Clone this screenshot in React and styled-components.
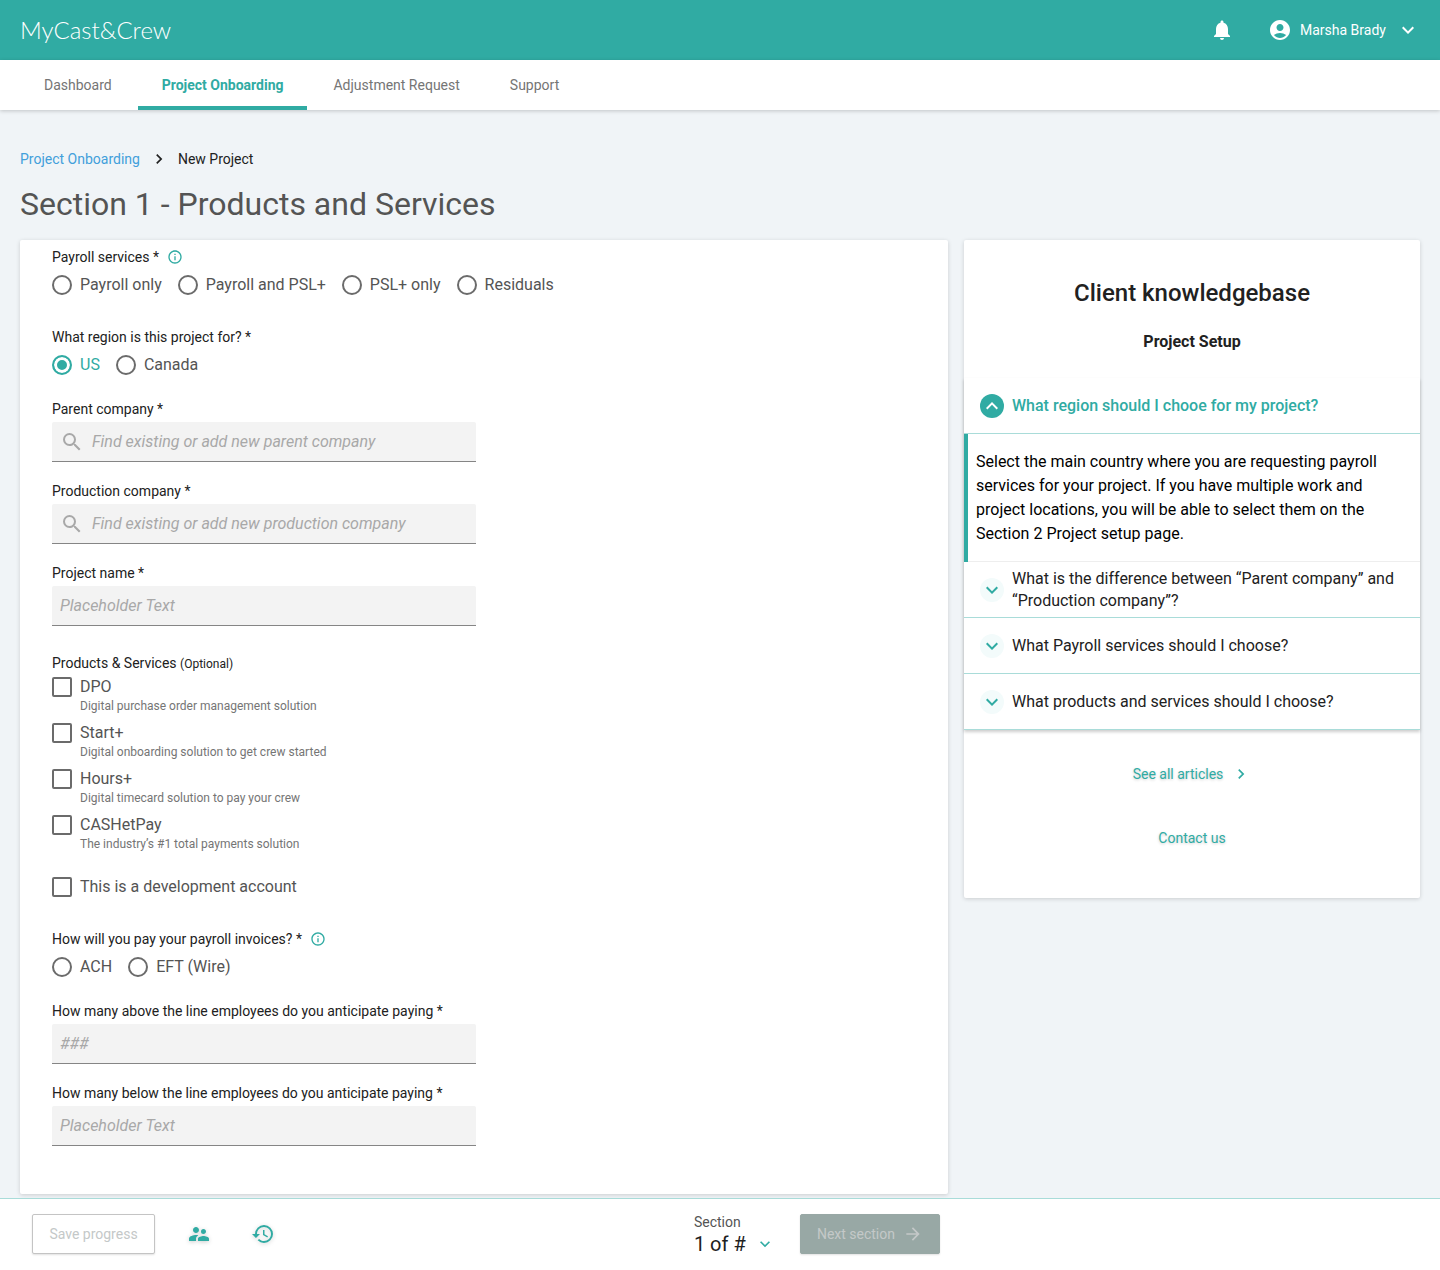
import React, { useState } from "react";
import styled, { createGlobalStyle, css } from "styled-components";
import {
  MdAccountCircle,
  MdArrowForward,
  MdChevronRight,
  MdExpandLess,
  MdExpandMore,
  MdHistory,
  MdInfoOutline,
  MdNotifications,
  MdSearch,
  MdSupervisorAccount,
} from "react-icons/md";

const color = {
  teal: "#30aba3",
  tealLine: "#a9dcd9",
  tealTint: "#f3fbfb",
  page: "#f0f4f7",
  ink: "#212121",
  text: "#545454",
  muted: "#757575",
  field: "#f3f3f3",
  placeholder: "#a8a8a8",
  link: "#429fdb",
};

const GlobalStyle = createGlobalStyle`
  *, *::before, *::after { box-sizing: border-box; }
  body {
    margin: 0;
    background: ${color.page};
    color: ${color.ink};
    font: 400 14px/20px Roboto, "Liberation Sans", sans-serif;
  }
  h1, h2, h3, p { margin: 0; }
  button, input, select { font: inherit; color: inherit; }
  a { text-decoration: none; color: inherit; }
  svg { display: block; flex: none; }
`;

const Page = styled.div`
  min-height: 100vh;
  display: flex;
  flex-direction: column;
`;

const PlainButton = styled.button`
  display: flex;
  align-items: center;
  padding: 0;
  border: 0;
  background: none;
  cursor: pointer;
`;

/* Top bar */
const TopBar = styled.header`
  display: flex;
  align-items: center;
  justify-content: space-between;
  height: 60px;
  padding: 0 20px;
  background: ${color.teal};
  color: #fff;
`;

const Brand = styled.a`
  font: 300 24px/32px Lato, Roboto, sans-serif;
`;

const TopActions = styled.div`
  display: flex;
  align-items: center;
  gap: 34px;
`;

const UserButton = styled(PlainButton)`
  gap: 8px;
`;

const UserName = styled.span`
  min-width: 88px;
  text-align: left;
`;

/* Tabs */
const TabBar = styled.nav`
  position: relative;
  display: flex;
  gap: 2px;
  height: 50px;
  padding: 0 20px;
  background: #fff;
  box-shadow: 0 1px 4px rgba(0, 0, 0, 0.2);
`;

const Tab = styled.a`
  display: flex;
  align-items: center;
  justify-content: center;
  padding: 4px 24px 0;
  border-bottom: 4px solid transparent;
  color: ${color.muted};
  ${({ $active }) =>
    $active &&
    css`
      border-color: ${color.teal};
      color: ${color.teal};
      font-weight: 700;
    `}
`;

/* Page body */
const Main = styled.main`
  flex: 1;
  padding: 39px 20px 4px;
`;

const Breadcrumb = styled.nav`
  display: flex;
  align-items: center;
  gap: 9px;
`;

const CrumbLink = styled.a`
  color: ${color.link};
`;

const PageTitle = styled.h1`
  margin: 15px 0 16px;
  font-size: 32px;
  font-weight: 400;
  line-height: 40px;
  color: ${color.text};
`;

const columns = css`
  display: grid;
  grid-template-columns: minmax(0, 1fr) 456px;
  gap: 16px;
`;

const Columns = styled.div`
  ${columns}
  align-items: start;
`;

const Card = styled.section`
  background: #fff;
  border-radius: 2px;
  box-shadow: 0 1px 4px rgba(0, 0, 0, 0.16);
`;

/* Form */
const Form = styled(Card).attrs({ as: "form" })`
  padding: 7px 32px 48px;
`;

const Group = styled.div`
  margin-top: ${({ $gap }) => $gap || 0}px;
`;

const LabelRow = styled.div`
  display: flex;
  align-items: center;
  gap: 8px;
`;

const InfoButton = styled(PlainButton)`
  color: ${color.teal};
`;

const Optional = styled.span`
  font-size: 12px;
  line-height: 16px;
`;

const Options = styled.div`
  display: flex;
  flex-wrap: wrap;
  gap: 16px;
  margin-top: 8px;
`;

const Choice = styled.label`
  display: grid;
  grid-template-columns: 20px auto;
  column-gap: 8px;
  justify-content: start;
  font-size: 16px;
  color: ${color.text};
  cursor: pointer;
  &:has(input[type="radio"]:checked) {
    color: ${color.teal};
  }
`;

const Mark = styled.input`
  appearance: none;
  width: 20px;
  height: 20px;
  margin: 0;
  border: 2px solid #6b6b6b;
  border-radius: ${({ type }) => (type === "radio" ? "50%" : "2px")};
  background: #fff;
  &:checked {
    border-color: ${color.teal};
    background: ${color.teal};
    box-shadow: inset 0 0 0 3px #fff;
  }
`;

const Hint = styled.span`
  grid-column: 2;
  font-size: 12px;
  line-height: 18px;
  color: ${color.muted};
`;

const CheckList = styled.div`
  display: grid;
  gap: 8px;
  margin-top: 4px;
`;

const InputBox = styled.div`
  display: flex;
  align-items: center;
  gap: 8px;
  max-width: 424px;
  height: 40px;
  margin-top: 3px;
  padding: 0 8px;
  background: ${color.field};
  border-bottom: 1px solid #858585;
  border-radius: 2px 2px 0 0;
  color: ${color.placeholder};
`;

const TextInput = styled.input`
  flex: 1;
  min-width: 0;
  padding: 0;
  border: 0;
  outline: 0;
  background: none;
  color: ${color.ink};
  font-size: 16px;
  &::placeholder {
    color: ${color.placeholder};
    font-style: italic;
    opacity: 1;
  }
`;

/* Knowledge base */
const SideHead = styled.div`
  padding: 37px 16px 24px;
  text-align: center;
`;

const SideTitle = styled.h2`
  font-size: 24px;
  font-weight: 500;
  line-height: 32px;
`;

const SideSubtitle = styled.h3`
  margin-top: 21px;
  font-size: 16px;
  font-weight: 700;
  line-height: 24px;
`;

const Accordion = styled.div`
  box-shadow: 0 2px 3px rgba(0, 0, 0, 0.2);
`;

const Question = styled(PlainButton)`
  gap: 8px;
  width: 100%;
  height: 56px;
  padding: 0 16px;
  border-bottom: 1px solid ${color.tealLine};
  font-size: 16px;
  line-height: 22px;
  text-align: left;
  color: ${({ $open }) => ($open ? color.teal : color.ink)};
  font-weight: ${({ $open }) => ($open ? 500 : 400)};
`;

const Disc = styled.span`
  display: grid;
  place-items: center;
  flex: none;
  width: 24px;
  height: 24px;
  border-radius: 50%;
  background: ${({ $open }) => ($open ? color.teal : color.tealTint)};
  color: ${({ $open }) => ($open ? "#fff" : color.teal)};
`;

const Answer = styled.p`
  padding: 16px 16px 16px 8px;
  border-left: 4px solid ${color.teal};
  box-shadow: inset 0 -1px #eee;
  font-size: 16px;
  line-height: 24px;
  color: #000;
`;

const SideLinks = styled.div`
  display: flex;
  flex-direction: column;
  align-items: center;
  gap: 24px;
  padding: 24px 16px 40px;
`;

const SideLink = styled.a`
  display: flex;
  align-items: center;
  gap: 8px;
  height: 40px;
  color: ${color.teal};
  text-shadow: 0 1px 3px rgba(0, 0, 0, 0.2);
`;

/* Footer */
const Footer = styled.footer`
  ${columns}
  position: sticky;
  bottom: 0;
  height: 72px;
  padding: 0 20px 2px;
  border-top: 1px solid ${color.tealLine};
  background: #fff;
`;

const FooterActions = styled.div`
  display: flex;
  align-items: center;
  justify-content: space-between;
  padding: 0 8px 0 12px;
`;

const FooterGroup = styled.div`
  display: flex;
  align-items: center;
  gap: 24px;
`;

const FooterButton = styled(PlainButton)`
  justify-content: center;
  gap: 8px;
  min-width: ${({ $solid }) => ($solid ? 140 : 123)}px;
  height: 40px;
  padding: 0 16px;
  border-radius: 2px;
  box-shadow: 0 1px 2px rgba(0, 0, 0, 0.12);
  border: 1px solid ${({ $solid }) => ($solid ? "#98a8a5" : "#c4c4c4")};
  background: ${({ $solid }) => ($solid ? "#98a8a5" : "#fff")};
  color: #c4c8c8;
  cursor: default;
`;

const IconButton = styled(PlainButton)`
  justify-content: center;
  width: 40px;
  height: 40px;
  color: ${color.teal};
  filter: drop-shadow(0 1px 2px rgba(0, 0, 0, 0.2));
`;

const SectionPicker = styled.label`
  display: grid;
  width: 82px;
  color: ${color.text};
`;

const SelectWrap = styled.span`
  position: relative;
  display: block;
`;

const Select = styled.select`
  appearance: none;
  width: 100%;
  height: 24px;
  padding: 0 24px 0 0;
  border: 0;
  background: none;
  font-size: 20px;
  line-height: 24px;
  color: ${color.ink};
`;

const SelectIcon = styled(MdExpandMore)`
  position: absolute;
  top: 2px;
  right: 1px;
  color: ${color.teal};
  pointer-events: none;
`;

const tabs = ["Dashboard", "Project Onboarding", "Adjustment Request", "Support"];

const products = [
  ["DPO", "Digital purchase order management solution"],
  ["Start+", "Digital onboarding solution to get crew started"],
  ["Hours+", "Digital timecard solution to pay your crew"],
  ["CASHetPay", "The industry’s #1 total payments solution"],
];

const articles = [
  {
    q: "What region should I chooe for my project?",
    a: "Select the main country where you are requesting payroll services for your project. If you have multiple work and project locations, you will be able to select them on the Section 2 Project setup page.",
  },
  {
    q: "What is the difference between “Parent company” and “Production company”?",
  },
  {
    q: "What Payroll services should I choose?",
  },
  {
    q: "What products and services should I choose?",
  },
];

function RadioGroup({ id, label, info, options, initial, gap }) {
  const [value, setValue] = useState(initial);
  return (
    <Group role="radiogroup" aria-labelledby={id} $gap={gap}>
      <LabelRow>
        <span id={id}>{label} *</span>
        {info && (
          <InfoButton type="button" aria-label={`About: ${label}`}>
            <MdInfoOutline size={16} />
          </InfoButton>
        )}
      </LabelRow>
      <Options>
        {options.map((o) => (
          <Choice key={o}>
            <Mark type="radio" name={id} checked={value === o} onChange={() => setValue(o)} />
            {o}
          </Choice>
        ))}
      </Options>
    </Group>
  );
}

function TextField({ id, label, placeholder, search, gap }) {
  return (
    <Group $gap={gap}>
      <LabelRow>
        <label htmlFor={id}>{label} *</label>
      </LabelRow>
      <InputBox>
        {search && <MdSearch size={24} />}
        <TextInput id={id} type="text" placeholder={placeholder} />
      </InputBox>
    </Group>
  );
}

function KnowledgeBase() {
  const [open, setOpen] = useState(0);
  return (
    <Card as="aside">
      <SideHead>
        <SideTitle>Client knowledgebase</SideTitle>
        <SideSubtitle>Project Setup</SideSubtitle>
      </SideHead>
      <Accordion>
        {articles.map(({ q, a }, i) => (
          <div key={q}>
            <Question
              type="button"
              aria-expanded={open === i}
              $open={open === i}
              onClick={() => setOpen(open === i ? -1 : i)}
            >
              <Disc $open={open === i}>
                {open === i ? <MdExpandLess size={24} /> : <MdExpandMore size={24} />}
              </Disc>
              {q}
            </Question>
            {open === i && a && <Answer>{a}</Answer>}
          </div>
        ))}
      </Accordion>
      <SideLinks>
        <SideLink href="#articles">
          See all articles
          <MdChevronRight size={20} />
        </SideLink>
        <SideLink href="#contact">Contact us</SideLink>
      </SideLinks>
    </Card>
  );
}

export default function App() {
  return (
    <Page>
      <GlobalStyle />
      <TopBar>
        <Brand href="#home">MyCast&amp;Crew</Brand>
        <TopActions>
          <PlainButton type="button" aria-label="Notifications">
            <MdNotifications size={24} />
          </PlainButton>
          <UserButton type="button">
            <MdAccountCircle size={24} />
            <UserName>Marsha Brady</UserName>
            <MdExpandMore size={24} />
          </UserButton>
        </TopActions>
      </TopBar>
      <TabBar>
        {tabs.map((t, i) => (
          <Tab key={t} href="#tab" $active={i === 1} aria-current={i === 1 ? "page" : undefined}>
            {t}
          </Tab>
        ))}
      </TabBar>

      <Main>
        <Breadcrumb aria-label="Breadcrumb">
          <CrumbLink href="#onboarding">Project Onboarding</CrumbLink>
          <MdChevronRight size={20} />
          <span>New Project</span>
        </Breadcrumb>
        <PageTitle>Section 1 - Products and Services</PageTitle>
        <Columns>
          <Form>
            <RadioGroup
              id="payroll"
              label="Payroll services"
              info
              options={["Payroll only", "Payroll and PSL+", "PSL+ only", "Residuals"]}
            />
            <RadioGroup
              id="region"
              label="What region is this project for?"
              options={["US", "Canada"]}
              initial="US"
              gap={32}
            />
            <TextField
              id="parent"
              label="Parent company"
              placeholder="Find existing or add new parent company"
              search
              gap={24}
            />
            <TextField
              id="production"
              label="Production company"
              placeholder="Find existing or add new production company"
              search
              gap={19}
            />
            <TextField id="name" label="Project name" placeholder="Placeholder Text" gap={19} />
            <Group role="group" aria-labelledby="products" $gap={27}>
              <span id="products">
                Products &amp; Services <Optional>(Optional)</Optional>
              </span>
              <CheckList>
                {products.map(([name, hint]) => (
                  <Choice key={name}>
                    <Mark type="checkbox" />
                    {name}
                    <Hint>{hint}</Hint>
                  </Choice>
                ))}
              </CheckList>
            </Group>
            <Group $gap={24}>
              <Choice>
                <Mark type="checkbox" />
                This is a development account
              </Choice>
            </Group>
            <RadioGroup
              id="invoices"
              label="How will you pay your payroll invoices?"
              info
              options={["ACH", "EFT (Wire)"]}
              gap={32}
            />
            <TextField
              id="above"
              label="How many above the line employees do you anticipate paying"
              placeholder="###"
              gap={24}
            />
            <TextField
              id="below"
              label="How many below the line employees do you anticipate paying"
              placeholder="Placeholder Text"
              gap={19}
            />
          </Form>
          <KnowledgeBase />
        </Columns>
      </Main>

      <Footer>
        <FooterActions>
          <FooterGroup>
            <FooterButton type="button" disabled>
              Save progress
            </FooterButton>
            <IconButton type="button" aria-label="Collaborators">
              <MdSupervisorAccount size={24} />
            </IconButton>
            <IconButton type="button" aria-label="History">
              <MdHistory size={24} />
            </IconButton>
          </FooterGroup>
          <FooterGroup>
            <SectionPicker>
              Section
              <SelectWrap>
                <Select>
                  <option>1 of #</option>
                  <option>2 of #</option>
                </Select>
                <SelectIcon size={20} />
              </SelectWrap>
            </SectionPicker>
            <FooterButton type="button" disabled $solid>
              Next section
              <MdArrowForward size={20} />
            </FooterButton>
          </FooterGroup>
        </FooterActions>
      </Footer>
    </Page>
  );
}
